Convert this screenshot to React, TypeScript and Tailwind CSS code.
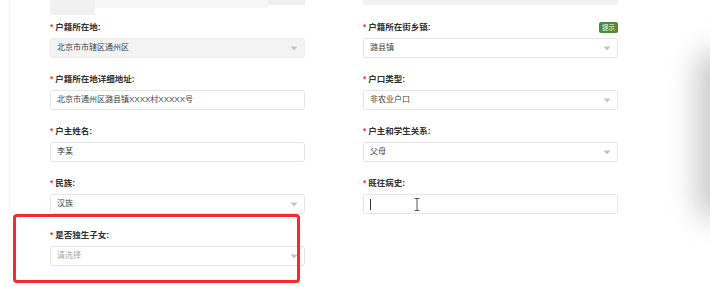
type Field = {
  label: string;
  value?: string;
  placeholder?: string;
  kind: 'select' | 'input' | 'disabled' | 'caret';
  badge?: string;
};

const left: Field[] = [
  { label: '户籍所在地', value: '北京市市辖区通州区', kind: 'disabled' },
  { label: '户籍所在地详细地址', value: '北京市通州区潞县镇XXXX村XXXXX号', kind: 'input' },
  { label: '户主姓名', value: '李某', kind: 'input' },
  { label: '民族', value: '汉族', kind: 'select' },
  { label: '是否独生子女', placeholder: '请选择', kind: 'select' },
];

const right: Field[] = [
  { label: '户籍所在街乡镇', value: '潞县镇', kind: 'select', badge: '提示' },
  { label: '户口类型', value: '非农业户口', kind: 'select' },
  { label: '户主和学生关系', value: '父母', kind: 'select' },
  { label: '既往病史', kind: 'caret' },
];

const Arrow = () => (
  <svg width="8" height="5" viewBox="0 0 8 5" className="shrink-0">
    <path d="M0.5 0.5 L7.5 0.5 L4 4.5 Z" fill="#c4c4c4" />
  </svg>
);

const FormField = ({ f }: { f: Field }) => (
  <div className="flex flex-col">
    <div className="mb-[5px] flex h-[12px] items-center justify-between">
      <div className="flex items-center text-[8.5px] font-bold text-[#333]">
        <span className="mr-[2px] text-[#f04040]">*</span>
        <span>{f.label}:</span>
      </div>
      {f.badge && (
        <span className="rounded-[2px] bg-[#4e8c37] px-[3px] text-[6.5px] leading-[11px] text-white">
          {f.badge}
        </span>
      )}
    </div>
    <div
      className={
        f.kind === 'disabled'
          ? 'flex h-[20px] items-center justify-between rounded-[3px] border border-[#ededed] bg-[#f3f3f3] px-[6px]'
          : 'flex h-[20px] items-center justify-between rounded-[3px] border border-[#e6e6e6] bg-white px-[6px]'
      }
    >
      {f.kind === 'caret' ? (
        <div className="flex items-center">
          <span className="h-[11px] w-[1px] bg-[#333]" />
          <svg width="6" height="13" viewBox="0 0 6 13" className="ml-[43px]">
            <path d="M0.5 0.5 H5.5 M3 0.5 V12.5 M0.5 12.5 H5.5" stroke="#555" strokeWidth="1" fill="none" />
          </svg>
        </div>
      ) : (
        <span className={f.placeholder ? 'text-[8px] text-[#aaa]' : 'text-[8px] text-[#444]'}>
          {f.value ?? f.placeholder}
        </span>
      )}
      {(f.kind === 'select' || f.kind === 'disabled') && <Arrow />}
    </div>
  </div>
);

export default function App() {
  return (
    <div
      className="relative h-[287px] w-[710px] overflow-hidden bg-white"
      style={{ fontFamily: '"Liberation Sans", "Noto Sans CJK SC", sans-serif' }}
    >
      <div className="absolute left-0 top-0 h-[210px] w-[10px] border-r border-[#f3f3f3]" />

      <div className="grid grid-cols-[255px_255px] gap-x-[58px] pl-[50px]">
        {/* cut-off row above */}
        <div className="flex h-[8px] items-start">
          <div className="h-[15px] w-[45px] bg-[#f1f1f1]" />
          <div className="h-[8px] flex-1 bg-[#f7f7f7]" />
          <div className="h-[5px] w-[37px] bg-[#efefef]" />
        </div>
        <div className="flex h-[8px] items-start">
          <div className="h-[5px] flex-1 rounded-b-[3px] bg-[#f2f2f2]" />
        </div>

        <div className="mt-[13px] flex flex-col gap-[15px]">
          {left.map((f) => (
            <FormField key={f.label} f={f} />
          ))}
        </div>
        <div className="mt-[13px] flex flex-col gap-[15px]">
          {right.map((f) => (
            <FormField key={f.label} f={f} />
          ))}
        </div>
      </div>

      {/* annotation box */}
      <div className="absolute left-[13px] top-[214px] h-[69px] w-[287px] rounded-[4px] border-[3px] border-[#f42b2b]" />

      {/* blurred edge at right */}
      <div className="absolute right-[-26px] top-[50px] h-[170px] w-[40px] rounded-full bg-[#9a9a9a] opacity-50 blur-[14px]" />
    </div>
  );
}
